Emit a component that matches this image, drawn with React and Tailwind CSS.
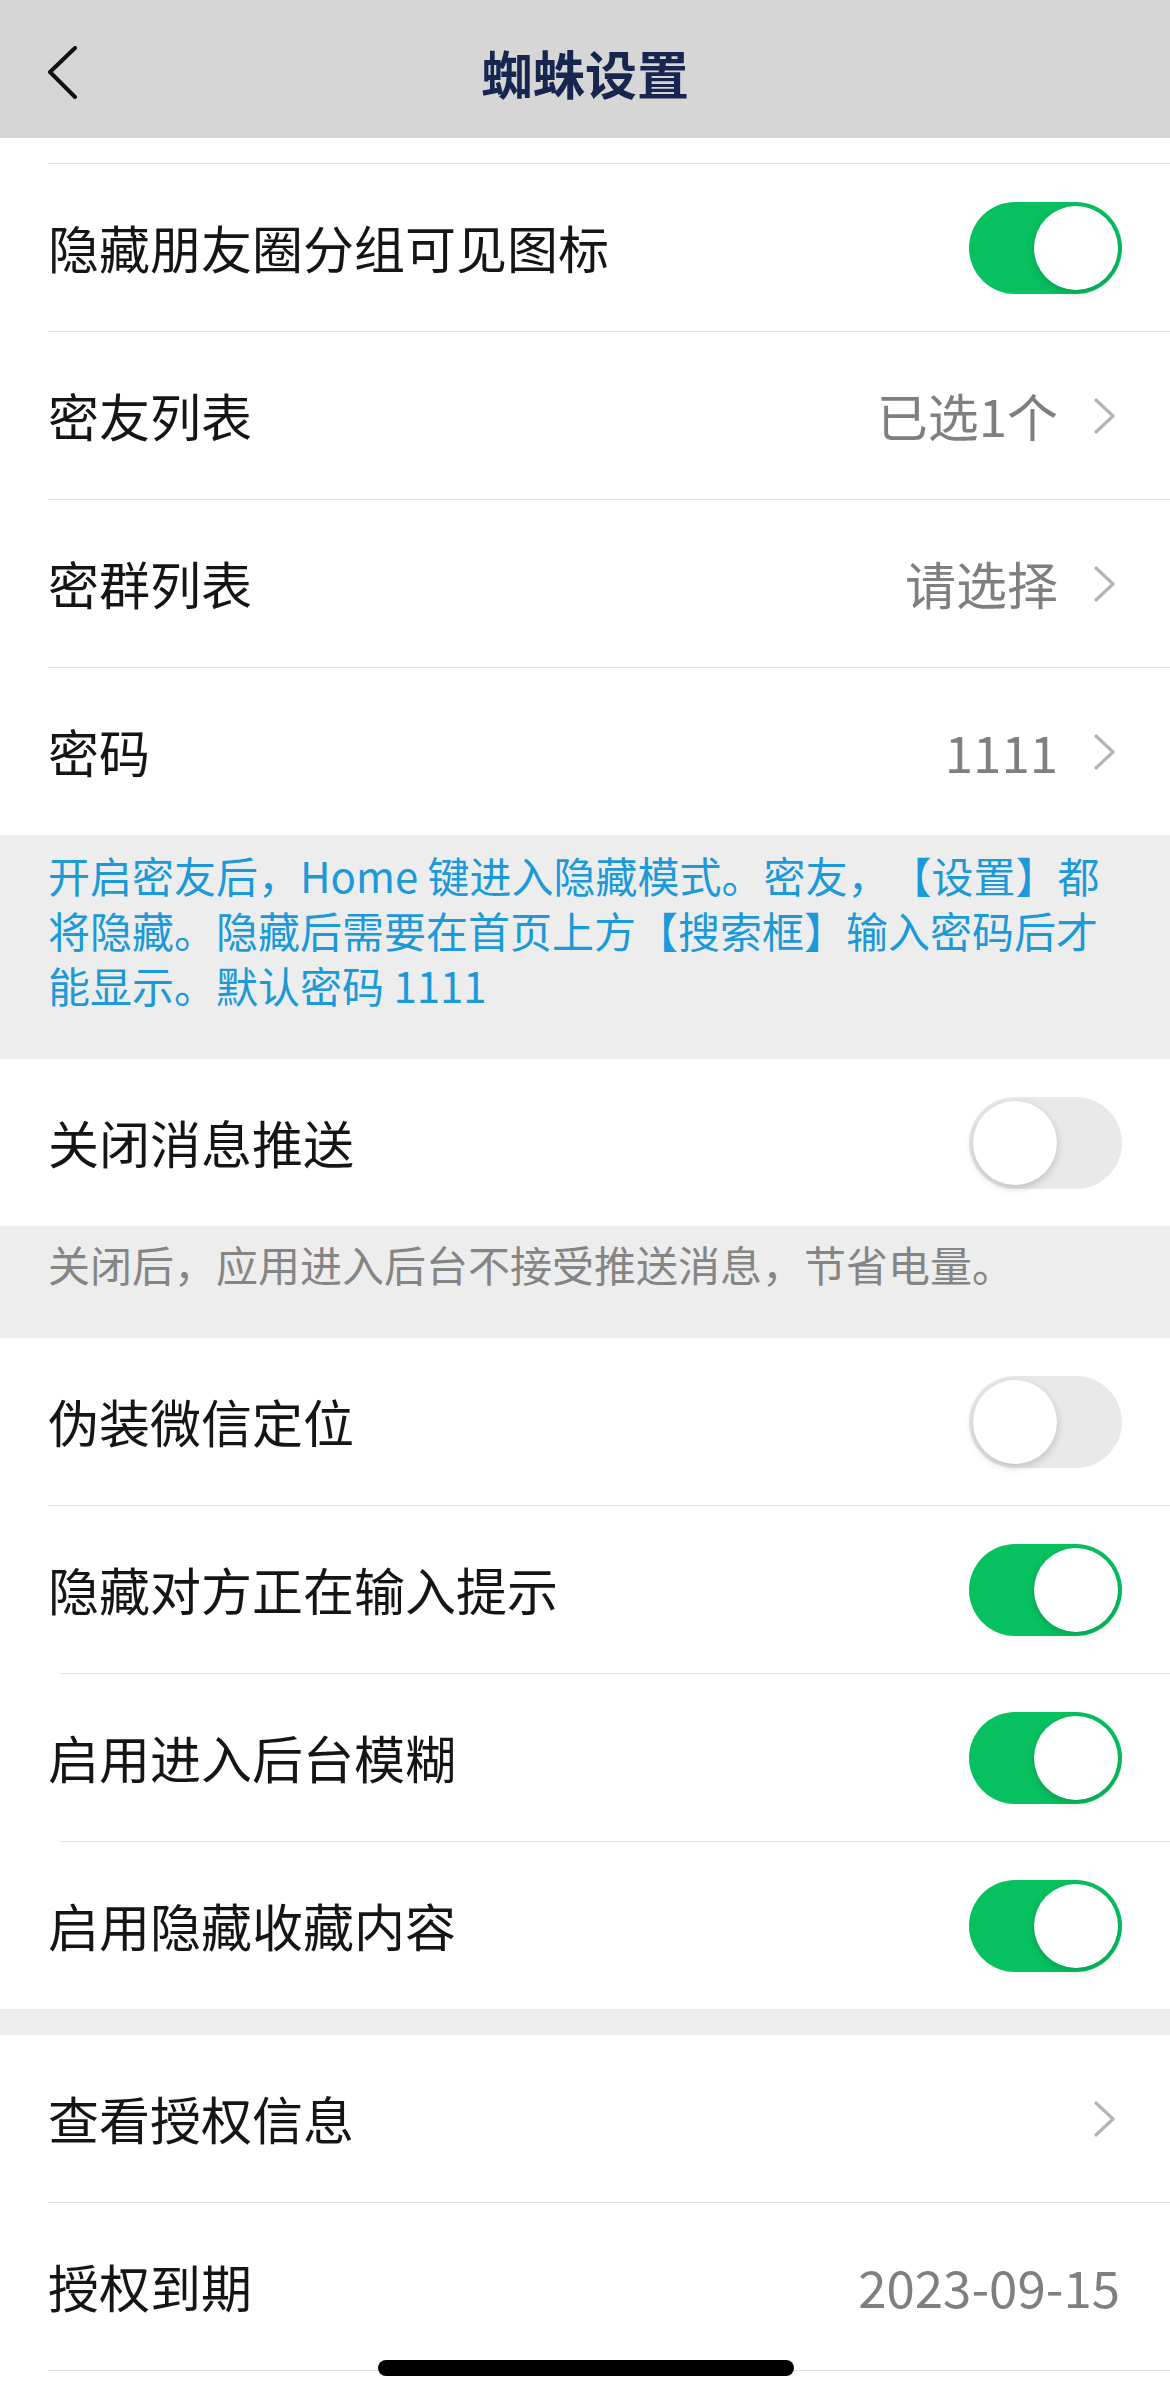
import React from "react";

const FONT = { fontFamily: '"Noto Sans CJK SC", "Noto Sans", sans-serif' };

const Toggle = ({ on }) => (
  <div
    className={`w-[153px] h-[92px] rounded-full p-[4px] flex items-center ${
      on ? "bg-[#07c160] justify-end" : "bg-[#e9e9e9] justify-start"
    }`}
  >
    <div className="w-[84px] h-[84px] rounded-full bg-white shadow-[0_3px_8px_rgba(0,0,0,0.18)]" />
  </div>
);

const Chevron = () => (
  <svg width="23" height="36" viewBox="0 0 23 36" className="mr-[6px]">
    <polyline
      points="3,2 20,18 3,34"
      fill="none"
      stroke="#b4b4b4"
      strokeWidth="3.2"
      strokeLinecap="round"
      strokeLinejoin="round"
    />
  </svg>
);

const Row = ({ label, value, toggle, arrow }) => (
  <div className="h-[167px] bg-white flex items-center pl-[48px] pr-[48px]">
    <span className="flex-1 text-[51px] leading-none text-[#151515]">{label}</span>
    {value && (
      <span className={`text-[51px] leading-none text-[#7f7f7f] ${arrow ? "mr-[35px]" : "mr-[2px]"}`}>
        {value}
      </span>
    )}
    {arrow && <Chevron />}
    {toggle !== undefined && <Toggle on={toggle} />}
  </div>
);

const Sep = ({ inset = "ml-[48px]" }) => (
  <div className="bg-white">
    <div className={`${inset} h-px bg-[#e3e3e3]`} />
  </div>
);

export default function App() {
  return (
    <div className="w-[1170px] min-h-[2398px] bg-white relative [text-spacing-trim:space-all]" style={FONT}>
      {/* header */}
      <div className="h-[138px] bg-[#d6d6d6] flex items-center pt-[8px] px-[44px]">
        <div className="w-[140px] flex items-center">
          <svg width="34" height="54" viewBox="0 0 34 54">
            <polyline
              points="31,2 6,26 31,51"
              fill="none"
              stroke="#111111"
              strokeWidth="4"
              strokeLinecap="round"
              strokeLinejoin="round"
            />
          </svg>
        </div>
        <div className="flex-1 text-center text-[52px] font-bold leading-none text-[#17264f]">
          蜘蛛设置
        </div>
        <div className="w-[140px]" />
      </div>

      {/* group 1 */}
      <div className="h-[25px] bg-white" />
      <Sep />
      <Row label="隐藏朋友圈分组可见图标" toggle={true} />
      <Sep />
      <Row label="密友列表" value="已选1个" arrow />
      <Sep />
      <Row label="密群列表" value="请选择" arrow />
      <Sep />
      <Row label="密码" value="1111" arrow />

      <div className="bg-[#ededed] pt-[12px] pb-[47px] px-[48px] text-[42px] leading-[55px] text-[#1c99d8]">
        开启密友后，Home 键进入隐藏模式。密友，【设置】都将隐藏。隐藏后需要在首页上方【搜索框】输入密码后才能显示。默认密码 1111
      </div>

      <Row label="关闭消息推送" toggle={false} />

      <div className="bg-[#ededed] pt-[10px] pb-[47px] px-[48px] text-[42px] leading-[55px] text-[#858585]">
        关闭后，应用进入后台不接受推送消息，节省电量。
      </div>

      {/* group 3 */}
      <Row label="伪装微信定位" toggle={false} />
      <Sep />
      <Row label="隐藏对方正在输入提示" toggle={true} />
      <Sep inset="ml-[60px]" />
      <Row label="启用进入后台模糊" toggle={true} />
      <Sep inset="ml-[60px]" />
      <Row label="启用隐藏收藏内容" toggle={true} />

      <div className="h-[26px] bg-[#ededed]" />

      {/* group 4 */}
      <Row label="查看授权信息" arrow />
      <Sep />
      <Row label="授权到期" value="2023-09-15" />
      <Sep />

      {/* home indicator */}
      <div className="absolute left-[378px] top-[2360px] w-[416px] h-[16px] rounded-full bg-black" />
    </div>
  );
}
